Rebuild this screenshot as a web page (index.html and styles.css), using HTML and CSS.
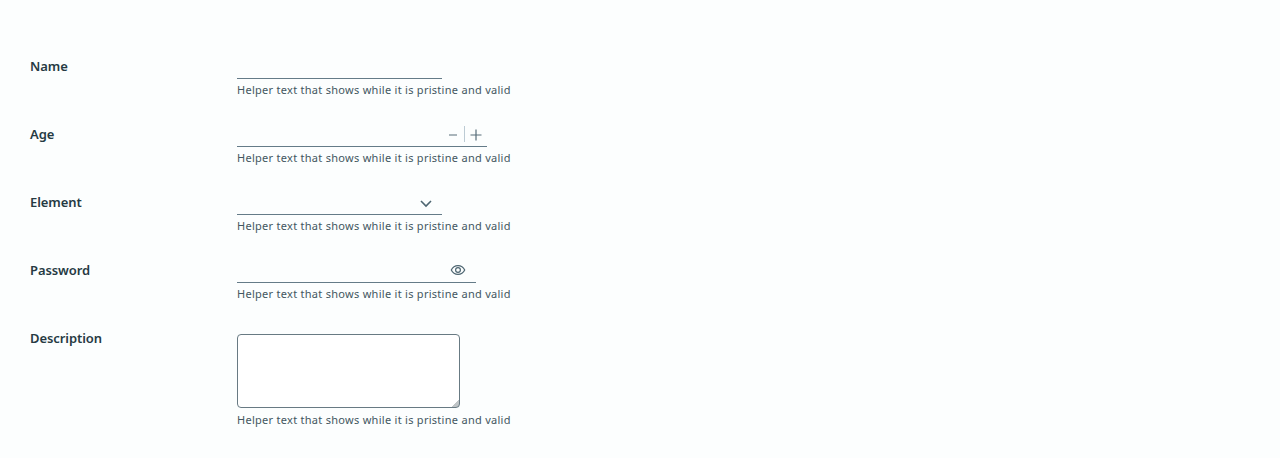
FILE: index.html
```html
<!DOCTYPE html>
<html lang="en">
<head>
<meta charset="utf-8">
<title>Form</title>
<link rel="stylesheet" href="styles.css">
</head>
<body>
<form class="form">
  <div class="row">
    <label class="label" for="name">Name</label>
    <div class="control">
      <div class="field"><input class="input" id="name" type="text"></div>
      <p class="helper">Helper text that shows while it is pristine and valid</p>
    </div>
  </div>
  <div class="row">
    <label class="label" for="age">Age</label>
    <div class="control">
      <div class="field field-number"><input class="input" id="age" type="text">
        <svg class="stepper" viewBox="0 0 46 22"><path class="divider" d="M23.5 2v16"/><path d="M8 11h8M29.5 11h11M35 5.5v11"/></svg>
      </div>
      <p class="helper">Helper text that shows while it is pristine and valid</p>
    </div>
  </div>
  <div class="row">
    <label class="label" for="element">Element</label>
    <div class="control">
      <div class="field"><input class="input" id="element" type="text">
        <svg class="icon caret" viewBox="0 0 16 16"><path d="M3 6l5 5 5-5"/></svg>
      </div>
      <p class="helper">Helper text that shows while it is pristine and valid</p>
    </div>
  </div>
  <div class="row">
    <label class="label" for="password">Password</label>
    <div class="control">
      <div class="field field-password"><input class="input" id="password" type="password">
        <svg class="icon eye" viewBox="0 0 16 16"><path d="M1.3 7c2.8-5.8 10.6-5.8 13.4 0c-2.8 5.8-10.6 5.8-13.4 0z"/><circle cx="8" cy="7" r="2.4"/></svg>
      </div>
      <p class="helper">Helper text that shows while it is pristine and valid</p>
    </div>
  </div>
  <div class="row row-last">
    <label class="label" for="description">Description</label>
    <div class="control">
      <textarea class="textarea" id="description"></textarea>
      <p class="helper">Helper text that shows while it is pristine and valid</p>
    </div>
  </div>
</form>
</body>
</html>
```
FILE: styles.css
```css
* { box-sizing: border-box; }
body { margin: 0; background: #fcfefe; font-family: "Noto Sans", sans-serif; }
.form { height: 458px; padding: 55px 30px 0; }
.row { display: flex; height: 68px; }
.row-last { height: 135px; }
.label { width: 207px; font: 600 13px/22px Metropolis, "Noto Sans", sans-serif; letter-spacing: -.08px; color: #263a43; }
.field { display: flex; align-items: center; width: 205px; height: 24px; border-bottom: 1px solid #647b88; }
.field-number { width: 250px; }
.field-password { width: 239px; }
.input { flex: 1; min-width: 0; border: 0; background: transparent; padding: 0; outline: 0; }
.helper { margin: 2px 0 0; font-size: 11px; line-height: 17px; letter-spacing: .28px; color: #435761; white-space: nowrap; }
.row-last .helper { margin-top: 3px; }
.icon { width: 16px; height: 16px; fill: none; stroke: #4d6571; stroke-width: 1.2; }
.caret { margin-right: 8px; stroke-width: 1.6; }
.eye { margin-right: 10px; }
.stepper { width: 46px; height: 22px; fill: none; stroke: #566d79; stroke-width: 1.2; }
.divider { stroke: #bccbd4; stroke-width: 1; }
.textarea {
  display: block; width: 223px; height: 74px; margin-top: 7px;
  border: 1px solid #687a83; border-radius: 4px; resize: none;
  background: linear-gradient(135deg, transparent 50%, #bfc4c6 50%) right bottom / 7px 7px no-repeat #fff;
}
```
